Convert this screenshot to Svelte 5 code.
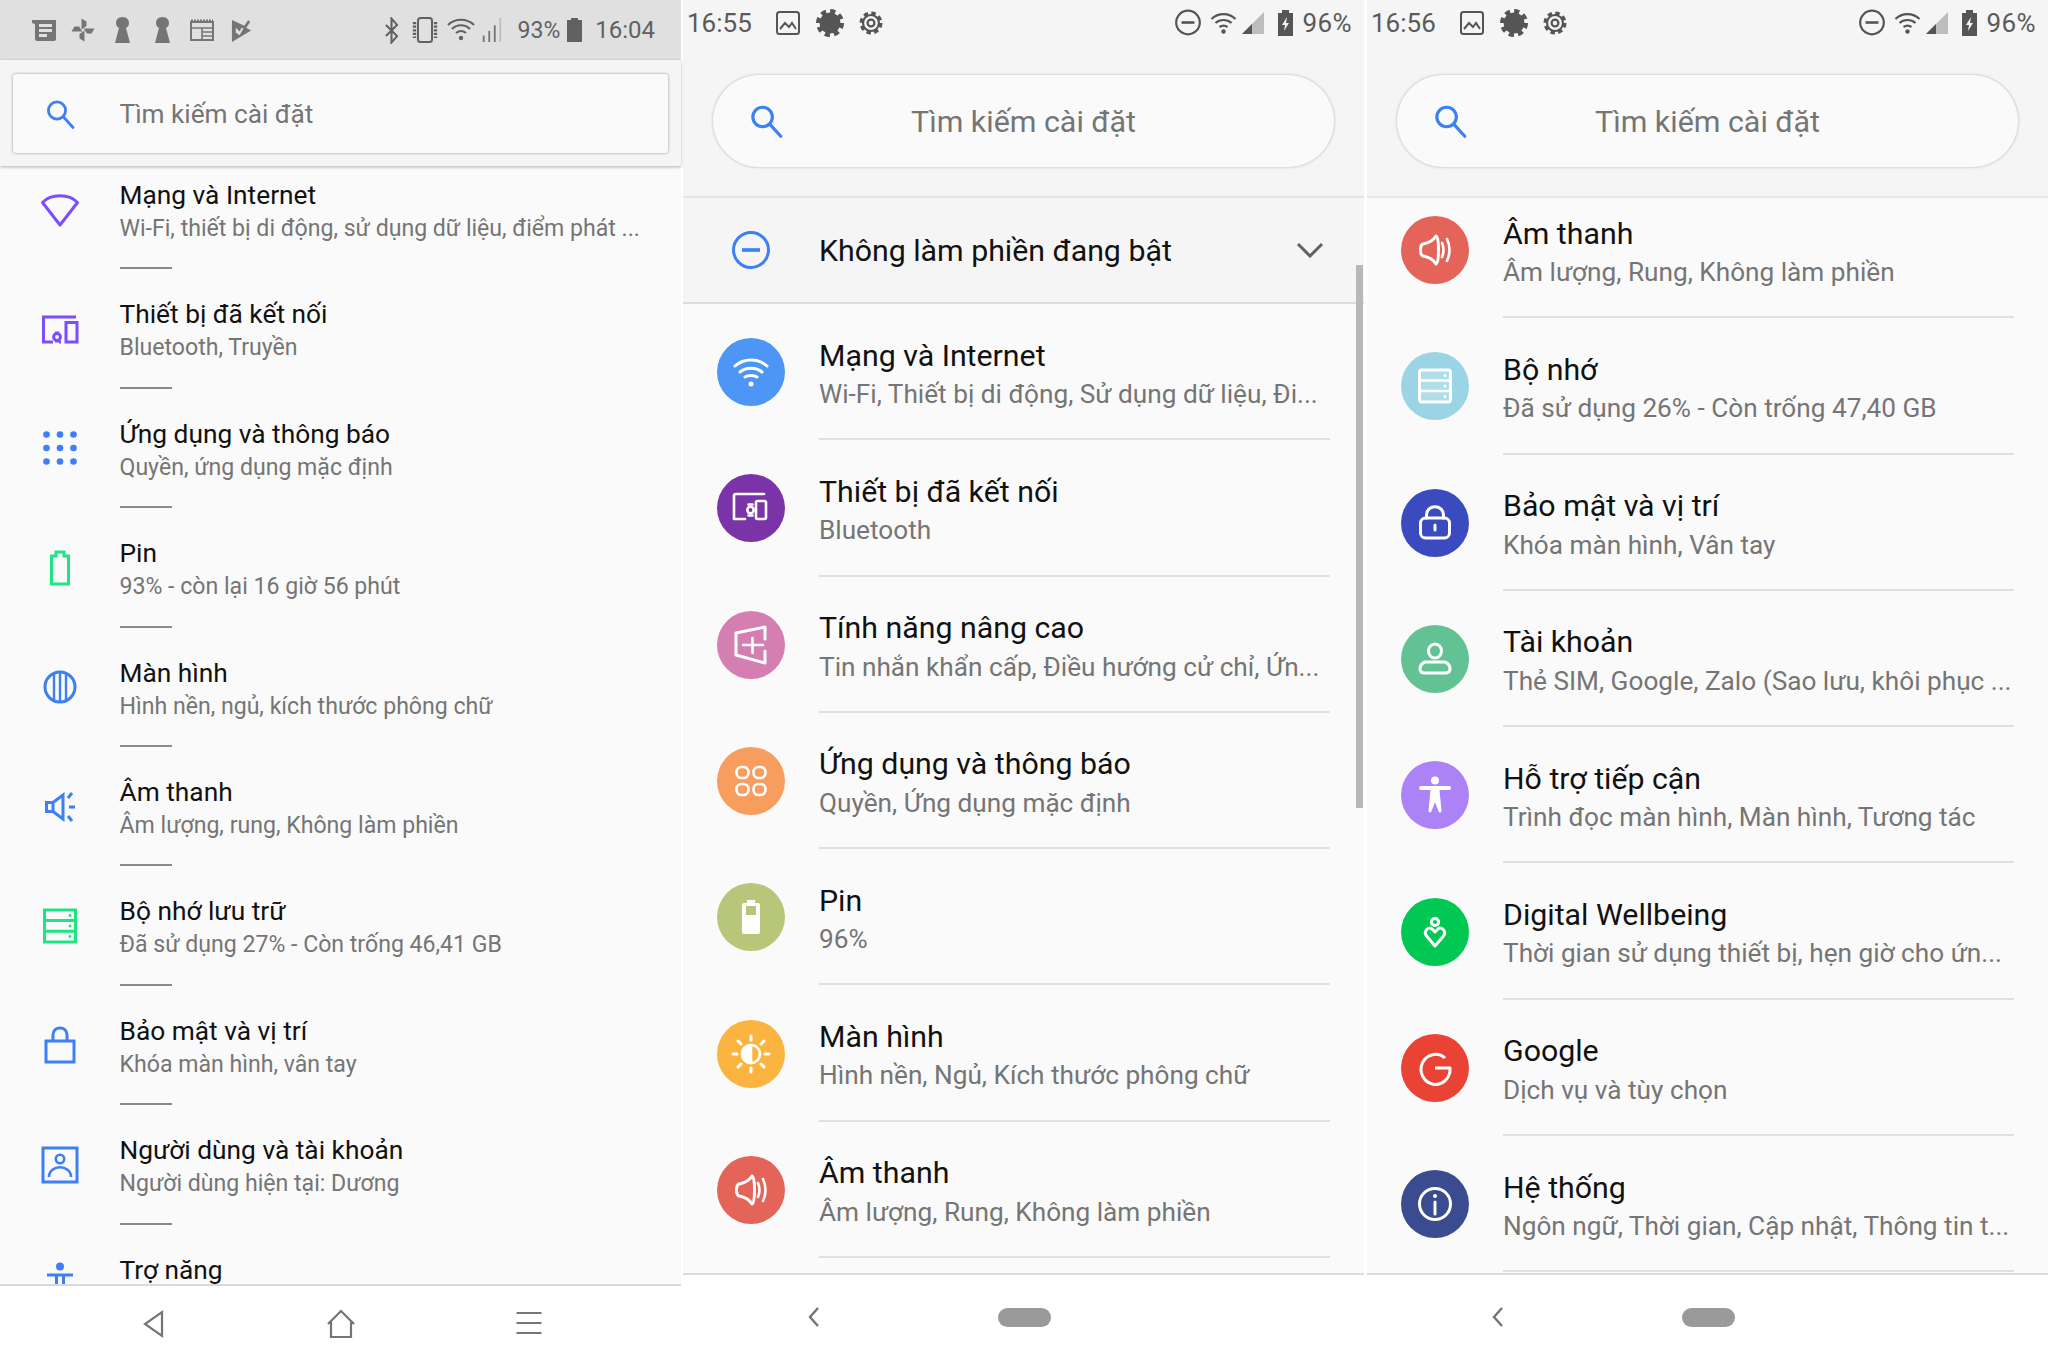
<script lang="ts">
	const oldRows = [
		{ icon: 'wifi', title: 'Mạng và Internet', sub: 'Wi-Fi, thiết bị di động, sử dụng dữ liệu, điểm phát ...' },
		{ icon: 'devices', title: 'Thiết bị đã kết nối', sub: 'Bluetooth, Truyền' },
		{ icon: 'dots', title: 'Ứng dụng và thông báo', sub: 'Quyền, ứng dụng mặc định' },
		{ icon: 'battery', title: 'Pin', sub: '93% - còn lại 16 giờ 56 phút' },
		{ icon: 'display', title: 'Màn hình', sub: 'Hình nền, ngủ, kích thước phông chữ' },
		{ icon: 'speaker', title: 'Âm thanh', sub: 'Âm lượng, rung, Không làm phiền' },
		{ icon: 'storage', title: 'Bộ nhớ lưu trữ', sub: 'Đã sử dụng 27% - Còn trống 46,41 GB' },
		{ icon: 'lock', title: 'Bảo mật và vị trí', sub: 'Khóa màn hình, vân tay' },
		{ icon: 'user', title: 'Người dùng và tài khoản', sub: 'Người dùng hiện tại: Dương' },
		{ icon: 'access', title: 'Trợ năng', sub: '' }
	];

	const listA = [
		{ icon: 'wifi', color: '#4d96f5', title: 'Mạng và Internet', sub: 'Wi-Fi, Thiết bị di động, Sử dụng dữ liệu, Đi...' },
		{ icon: 'devices', color: '#7b33a8', title: 'Thiết bị đã kết nối', sub: 'Bluetooth' },
		{ icon: 'plus', color: '#d57eb1', title: 'Tính năng nâng cao', sub: 'Tin nhắn khẩn cấp, Điều hướng cử chỉ, Ứn...' },
		{ icon: 'apps', color: '#f79d5e', title: 'Ứng dụng và thông báo', sub: 'Quyền, Ứng dụng mặc định' },
		{ icon: 'battery', color: '#b7c678', title: 'Pin', sub: '96%' },
		{ icon: 'sun', color: '#fbb440', title: 'Màn hình', sub: 'Hình nền, Ngủ, Kích thước phông chữ' },
		{ icon: 'sound', color: '#e5645a', title: 'Âm thanh', sub: 'Âm lượng, Rung, Không làm phiền' }
	];

	const listB = [
		{ icon: 'sound', color: '#e5645a', title: 'Âm thanh', sub: 'Âm lượng, Rung, Không làm phiền' },
		{ icon: 'storage', color: '#9ad4e5', title: 'Bộ nhớ', sub: 'Đã sử dụng 26% - Còn trống 47,40 GB' },
		{ icon: 'lock', color: '#3a4bc0', title: 'Bảo mật và vị trí', sub: 'Khóa màn hình, Vân tay' },
		{ icon: 'user', color: '#62c294', title: 'Tài khoản', sub: 'Thẻ SIM, Google, Zalo (Sao lưu, khôi phục ...' },
		{ icon: 'access', color: '#ac82f7', title: 'Hỗ trợ tiếp cận', sub: 'Trình đọc màn hình, Màn hình, Tương tác' },
		{ icon: 'heart', color: '#00c853', title: 'Digital Wellbeing', sub: 'Thời gian sử dụng thiết bị, hẹn giờ cho ứn...' },
		{ icon: 'google', color: '#ea4335', title: 'Google', sub: 'Dịch vụ và tùy chọn' },
		{ icon: 'info', color: '#3b4b8f', title: 'Hệ thống', sub: 'Ngôn ngữ, Thời gian, Cập nhật, Thông tin t...' }
	];
</script>

{#snippet oldIcon(name)}
	<svg class="old-icon" viewBox="0 0 40 40" fill="none" stroke-width="3">
		{#if name === 'wifi'}
			<path d="M2.5 12.5 C11 3.5 29 3.5 37.5 12.5 L20 35 Z" stroke="#7c4dff" stroke-linejoin="round" />
		{:else if name === 'devices'}
			<path d="M36 8 H3.5 V33 H13 M19 33 H21" stroke="#7c4dff" />
			<rect x="26" y="13.5" width="11" height="19.5" stroke="#7c4dff" />
			<circle cx="17" cy="28" r="3.4" stroke="#7c4dff" />
			<path d="M15 24 h4 M15 32 h4" stroke="#7c4dff" />
		{:else if name === 'dots'}
			{#each [6.5, 20, 33.5] as y}
				{#each [6.5, 20, 33.5] as x}
					<circle cx={x} cy={y} r="3.3" fill="#3d7ff5" />
				{/each}
			{/each}
		{:else if name === 'battery'}
			<path d="M11.5 8 H16 V4 H24 V8 H28.5 V36 H11.5 Z" stroke="#1de583" stroke-width="3" />
		{:else if name === 'display'}
			<circle cx="20" cy="20" r="15" stroke="#3d7ff5" stroke-width="3" />
			<path d="M14 6 V34 M20 5 V35 M26 6 V34" stroke="#3d7ff5" stroke-width="2.4" />
		{:else if name === 'speaker'}
			<path d="M6.5 15.5 H13 L23 8 V32 L13 24.5 H6.5 Z M13 15.5 V24.5" stroke="#3d7ff5" stroke-width="3" />
			<path d="M28 11 L32 6 M29 20 H35 M28 29 L32 34" stroke="#3d7ff5" stroke-width="3" />
		{:else if name === 'storage'}
			<rect x="4.5" y="4" width="31" height="32" stroke="#1de583" stroke-width="3" />
			<path d="M4.5 14.6 H35.5 M4.5 25.3 H35.5" stroke="#1de583" stroke-width="3" />
			<circle cx="30" cy="9.5" r="1.4" fill="#1de583" />
			<circle cx="30" cy="20" r="1.4" fill="#1de583" />
			<circle cx="30" cy="30.5" r="1.4" fill="#1de583" />
		{:else if name === 'lock'}
			<rect x="6" y="16" width="28" height="21" stroke="#3d7ff5" stroke-width="3" />
			<path d="M13 16 V10 C13 0.5 27 0.5 27 10 V16" stroke="#3d7ff5" stroke-width="3" />
		{:else if name === 'user'}
			<rect x="3" y="3" width="34" height="34" stroke="#3d7ff5" stroke-width="3" />
			<circle cx="20" cy="14" r="4.2" stroke="#3d7ff5" stroke-width="2.6" />
			<path d="M9 32 C9 19 31 19 31 32" stroke="#3d7ff5" stroke-width="2.6" />
		{:else if name === 'access'}
			<circle cx="20" cy="2.5" r="4" fill="#3d7ff5" />
			<path d="M7 11 H33 M16.5 11 V28 M23.5 11 V28" stroke="#3d7ff5" stroke-width="3" />
		{/if}
	</svg>
{/snippet}

{#snippet badge(name, color)}
	<svg class="badge" viewBox="0 0 68 68" fill="none" stroke="#fff" stroke-width="2.6" stroke-linecap="round" stroke-linejoin="round">
		<circle cx="34" cy="34" r="34" fill={color} stroke="none" />
		{#if name === 'wifi'}
			<path d="M18 28 C27 20 41 20 50 28 M23 34 C29 29 39 29 45 34 M28 39 C31 37 37 37 40 39" stroke-width="3" />
			<circle cx="34" cy="46" r="2.5" fill="#fff" stroke="none" />
		{:else if name === 'devices'}
			<path d="M47 20 H19 Q17 20 17 22 V45 H28" />
			<rect x="39" y="27" width="10" height="18" rx="1.5" />
			<circle cx="33.5" cy="36" r="3.2" />
			<path d="M31.5 30.5 h4 M31.5 41.5 h4" />
		{:else if name === 'plus'}
			<path d="M48 28 V16 L19 22 V44 L48 52 V40" stroke-width="3" />
			<path d="M26 34 H46 M35.5 27 V42" stroke-width="2.6" />
		{:else if name === 'apps'}
			{#each [[25.5, 25.5], [42.5, 25.5], [25.5, 42.5], [42.5, 42.5]] as [x, y]}
				<rect x={x - 6} y={y - 5.5} width="12" height="11" rx="5" stroke-width="2.6" />
			{/each}
		{:else if name === 'battery'}
			<path d="M25 22 Q25 20 27 20 H30 V17 H38 V20 H41 Q43 20 43 22 V49 Q43 51 41 51 H27 Q25 51 25 49 Z" fill="#fff" stroke="none" />
			<rect x="29" y="23" width="10" height="9" fill="#b7c678" stroke="none" />
		{:else if name === 'sun'}
			<circle cx="34" cy="34" r="9" />
			<path d="M34 25 A9 9 0 0 0 34 43 Z" fill="#fff" />
			<path d="M34 16 V20 M34 48 V52 M16 34 H20 M48 34 H52 M21 21 L24 24 M47 21 L44 24 M21 47 L24 44 M47 47 L44 44" stroke-width="3" />
		{:else if name === 'sound'}
			<path d="M35 20 C32 25 28 27 22 28 Q19.5 29 19.5 34 Q19.5 39 22 40 C28 41 32 43 35 48 Q37.5 47 37.5 34 Q37.5 21 35 20 Z" stroke-width="3" />
			<path d="M41 27 Q44 34 41 41 M46 23 Q51 34 46 45" stroke-width="2.6" />
		{:else if name === 'storage'}
			<rect x="18.5" y="18" width="31" height="32" rx="2.5" stroke-width="3" />
			<path d="M18.5 28.5 H49.5 M18.5 39 H49.5" stroke-width="2.6" />
			<rect x="19" y="19" width="30" height="30" fill="#fff" fill-opacity=".22" stroke="none" />
			<circle cx="44" cy="23.5" r="1.5" fill="#fff" stroke="none" />
			<circle cx="44" cy="34" r="1.5" fill="#fff" stroke="none" />
			<circle cx="44" cy="44.5" r="1.5" fill="#fff" stroke="none" />
		{:else if name === 'lock'}
			<rect x="19.5" y="29" width="29" height="20" rx="5" stroke-width="3" />
			<path d="M25.5 29 V26 C25.5 15 42.5 15 42.5 26 V29" stroke-width="3" />
			<path d="M34 36 V41" stroke-width="3" />
		{:else if name === 'user'}
			<ellipse cx="34" cy="26" rx="6.5" ry="7" stroke-width="3" />
			<path d="M24 37 H44 Q49 39 49 44 Q49 48 44 48 H24 Q19 48 19 44 Q19 39 24 37 Z" stroke-width="3" />
		{:else if name === 'access'}
			<circle cx="34" cy="19.5" r="4" fill="#fff" stroke="none" />
			<path d="M20 27 H48" stroke-width="4" />
			<path d="M34 27 V37 M31 29 L29 50 L34 37 L39 50 L37 29" stroke-width="3" fill="#fff" />
		{:else if name === 'heart'}
			<circle cx="34" cy="24" r="3.6" stroke-width="3" />
			<path d="M34 48 L25.5 38 C22 33 28 28 31 31 L34 34 L37 31 C40 28 46 33 42.5 38 Z" stroke-width="3" />
		{:else if name === 'google'}
			<path d="M44 24 A14.5 15 0 1 0 49 34 H34" stroke-width="3" stroke-linecap="butt" />
		{:else if name === 'info'}
			<circle cx="34" cy="34" r="15.5" stroke-width="3" />
			<path d="M34 32 V44" stroke-width="3" />
			<circle cx="34" cy="26" r="2" fill="#fff" stroke="none" />
		{/if}
	</svg>
{/snippet}

{#snippet search(size)}
	<svg width={size} height={size} viewBox="0 0 30 30" fill="none" stroke="#3d7ff5" stroke-width="2.8" stroke-linecap="round">
		<circle cx="12" cy="11.5" r="8.6" />
		<path d="M18.5 18 L28 28.5" />
	</svg>
{/snippet}

{#snippet keyhole()}
	<svg width="15" height="26" viewBox="0 0 15 26" fill="#757575">
		<path d="M7.5 0 C12 0 14 3 14 6 C14 8 13 10 11 11 L15 26 H0 L4 11 C2 10 1 8 1 6 C1 3 3 0 7.5 0 Z" />
	</svg>
{/snippet}

{#snippet newStatus(time)}
	<div class="status">
		<span class="time">{time}</span>
		<svg class="s-image" width="24" height="24" viewBox="0 0 24 24" fill="none" stroke="#555" stroke-width="2">
			<rect x="1" y="1" width="22" height="22" rx="2.5" />
			<path d="M4 18 L9 12 L13 16 L16 12 L20 18" />
		</svg>
		<svg class="s-gear" width="28" height="30" viewBox="0 0 28 28">
			<circle cx="14" cy="14" r="10.5" fill="#555" />
			<circle cx="14" cy="14" r="11.5" fill="none" stroke="#555" stroke-width="5" stroke-dasharray="5 4" />
		</svg>
		<svg class="s-gear2" width="24" height="26" viewBox="0 0 24 24" fill="none" stroke="#555">
			<circle cx="12" cy="12" r="8" stroke-width="2.2" />
			<circle cx="12" cy="12" r="3.4" stroke-width="2.2" />
			<circle cx="12" cy="12" r="9.8" stroke-width="3.4" stroke-dasharray="4.4 3.3" />
		</svg>
		<span class="grow"></span>
		<svg width="26" height="27" viewBox="0 0 26 26" fill="none" stroke="#555" stroke-width="2.2">
			<circle cx="13" cy="13" r="11.8" />
			<path d="M6.5 13 H19.5" stroke-width="2.6" />
		</svg>
		<svg class="s-wifi" width="27" height="24" viewBox="0 0 27 24" fill="none" stroke="#555" stroke-width="2.2">
			<path d="M1.5 8 C8 1.5 19 1.5 25.5 8 M5.5 12 C10 8 17 8 21.5 12 M9.5 16 C12 14.3 15 14.3 17.5 16" />
			<circle cx="13.5" cy="20.5" r="2.2" fill="#555" stroke="none" />
		</svg>
		<svg class="s-signal" width="22" height="22" viewBox="0 0 22 22">
			<path d="M22 0 V22 H0 Z" fill="#bdbdbd" />
			<path d="M10 12 V22 H0 Z" fill="#555" />
		</svg>
		<svg class="s-batt" width="15" height="26" viewBox="0 0 15 26">
			<path d="M0 3 H4 V0 H11 V3 H15 V26 H0 Z" fill="#555" />
			<path d="M9 7 L4 15 H7 L6 21 L11 13 H8 Z" fill="#f5f5f5" />
		</svg>
		<span class="pct">96%</span>
	</div>
{/snippet}

{#snippet newSearch()}
	<div class="pill">
		<span class="pill-icon">{@render search(34)}</span>
		<span class="pill-text">Tìm kiếm cài đặt</span>
	</div>
{/snippet}

{#snippet newNav()}
	<nav class="nav-new">
		<svg width="14" height="22" viewBox="0 0 14 22" fill="none" stroke="#757575" stroke-width="2.4">
			<path d="M11 2 L3 11 L11 20" />
		</svg>
		<span class="home-pill"></span>
	</nav>
{/snippet}

{#snippet roundRows(rows)}
	{#each rows as row}
		<div class="row-new">
			<div class="slot-new">{@render badge(row.icon, row.color)}</div>
			<div class="body-new">
				<div class="title-new">{row.title}</div>
				<div class="sub-new">{row.sub}</div>
				<div class="rule-new"></div>
			</div>
		</div>
	{/each}
{/snippet}

<div class="app">
	<section class="phone old">
		<div class="status-old">
			<span class="cell">
				<svg width="24" height="21" viewBox="0 0 24 21" fill="#757575">
					<path d="M0 0 H24 V19 Q24 21 22 21 H5 Q3 21 3 19 V4 L0 3 Z M7 4 V7 H20 V4 Z M7 9 V12 H20 V9 Z M7 14 V17 H15 V14 Z" fill-rule="evenodd" />
				</svg>
			</span>
			<span class="cell">
				<svg width="24" height="24" viewBox="0 0 24 24" fill="#757575">
					{#each [0, 90, 180, 270] as turn}
						<path d="M10.5 11.5 V0.5 L15.5 3.5 V8 Z" transform="rotate({turn} 12 12)" />
					{/each}
				</svg>
			</span>
			<span class="cell">{@render keyhole()}</span>
			<span class="cell">{@render keyhole()}</span>
			<span class="cell">
				<svg width="24" height="22" viewBox="0 0 24 22" fill="none" stroke="#757575" stroke-width="2">
					<rect x="1" y="3" width="22" height="18" />
					<path d="M1 2 H23" stroke-dasharray="2 1" stroke-width="3" />
					<path d="M1 9 H23 M12 9 V21 M12 13 H23 M12 17 H23" stroke-width="1.6" />
				</svg>
			</span>
			<span class="cell">
				<svg width="21" height="23" viewBox="0 0 22 24" fill="#757575">
					<path d="M1 1 L14 7 L18 1 L20 3 L16 9 L21 12 L1 24 Z M5 9 V14 L9 17 L13 10 L11 9 L9 13 Z" fill-rule="evenodd" />
				</svg>
			</span>
			<span class="grow"></span>
			<svg width="17" height="27" viewBox="0 0 18 34" fill="none" stroke="#616161" stroke-width="2.6">
				<path d="M2 10 L16 24 L9 32 V2 L16 10 L2 24" />
			</svg>
			<svg class="s-vib" width="26" height="26" viewBox="0 0 26 26" fill="none" stroke="#616161" stroke-width="2">
				<rect x="6" y="1" width="14" height="24" rx="2.5" />
				<path d="M2.5 5 V21 M23.5 5 V21" stroke-width="3.4" stroke-dasharray="2.2 1.4" />
			</svg>
			<svg class="s-wifi-old" width="28" height="24" viewBox="0 0 28 24" fill="none" stroke="#616161" stroke-width="2">
				<path d="M1 7 C8 0 20 0 27 7 M5 11 C10 6 18 6 23 11 M9 15 C12 12.5 16 12.5 19 15" />
				<circle cx="14" cy="20" r="2.2" fill="#616161" stroke="none" />
			</svg>
			<svg class="s-bars" width="20" height="24" viewBox="0 0 20 26" fill="#757575">
				<rect x="0" y="19" width="2" height="7" />
				<rect x="6" y="14" width="2" height="12" />
				<rect x="12" y="8" width="2" height="18" />
				<rect x="18" y="0" width="2" height="26" fill="#bdbdbd" />
			</svg>
			<span class="pct-old">93%</span>
			<svg class="s-batt-old" width="15" height="24" viewBox="0 0 15 24" fill="#616161">
				<path d="M0 2 H4 V0 H11 V2 H15 V24 H0 Z" />
			</svg>
			<span class="time-old">16:04</span>
		</div>
		<header class="head-old">
			<div class="card">
				<span class="card-icon">{@render search(30)}</span>
				<span class="card-text">Tìm kiếm cài đặt</span>
			</div>
		</header>
		<div class="list">
			<div class="shift-old">
				{#each oldRows as row}
					<div class="row-old">
						<div class="slot-old">{@render oldIcon(row.icon)}</div>
						<div class="body-old">
							<div class="title-old">{row.title}</div>
							<div class="sub-old">{row.sub}</div>
							<div class="rule-old"></div>
						</div>
					</div>
				{/each}
			</div>
		</div>
		<nav class="nav-old">
			<svg width="40" height="30" viewBox="0 0 40 30" fill="none" stroke="#757575" stroke-width="2.2">
				<path d="M29 3 V27 L12 15 Z" />
			</svg>
			<svg width="40" height="30" viewBox="0 0 40 30" fill="none" stroke="#757575" stroke-width="2.2">
				<path d="M7 15 L20 2 L33 15 M10 13 V28 H30 V13" />
			</svg>
			<svg width="40" height="30" viewBox="0 0 40 30" fill="none" stroke="#757575" stroke-width="2">
				<path d="M7.5 4 H32.5 M7.5 14 H32.5 M7.5 24 H32.5" />
			</svg>
		</nav>
	</section>

	<section class="phone new second">
		<header class="head-new">
			{@render newStatus('16:55')}
			{@render newSearch()}
		</header>
		<div class="banner">
			<svg width="38" height="38" viewBox="0 0 38 38" fill="none" stroke="#3d7ff5" stroke-width="3">
				<circle cx="19" cy="19" r="17.5" />
				<path d="M10 19 H28" stroke-width="3.6" />
			</svg>
			<span class="banner-text">Không làm phiền đang bật</span>
			<svg class="banner-caret" width="28" height="16" viewBox="0 0 28 16" fill="none" stroke="#616161" stroke-width="3">
				<path d="M2 2 L14 14 L26 2" />
			</svg>
		</div>
		<div class="list">
			{@render roundRows(listA)}
		</div>
		{@render newNav()}
		<div class="scrollbar"></div>
	</section>

	<section class="phone new third">
		<header class="head-new">
			{@render newStatus('16:56')}
			{@render newSearch()}
		</header>
		<div class="list">
			<div class="shift-new">
				{@render roundRows(listB)}
			</div>
		</div>
		{@render newNav()}
	</section>
</div>

<style>
	:global(body) {
		margin: 0;
		background: #fff;
	}

	.app {
		display: flex;
		width: 2048px;
		height: 1363px;
		overflow: hidden;
		font-family: Roboto, 'Liberation Sans', sans-serif;
	}

	.grow {
		flex: 1;
	}

	.phone {
		position: relative;
		display: flex;
		flex-direction: column;
		flex: none;
		height: 1363px;
		background: #fafafa;
	}

	.old {
		width: 681px;
		margin-right: 2px;
	}

	.second {
		width: 681px;
		margin-right: 3px;
	}

	.third {
		width: 681px;
	}

	.list {
		flex: 1;
		min-height: 0;
		overflow: hidden;
	}

	/* left phone */
	.status-old {
		display: flex;
		align-items: center;
		height: 60px;
		padding: 0 26px 0 24px;
		background: #e0e0e0;
		color: #616161;
		box-sizing: border-box;
	}

	.cell {
		display: flex;
		justify-content: center;
		flex: none;
		width: 39.6px;
	}

	.s-vib {
		margin-left: 12px;
	}

	.s-wifi-old {
		margin-left: 9px;
	}

	.s-bars {
		margin-left: 7px;
	}

	.pct-old {
		margin-left: 16px;
		font-size: 23px;
	}

	.s-batt-old {
		margin-left: 7px;
	}

	.time-old {
		margin-left: 13px;
		font-size: 24px;
	}

	.head-old {
		position: relative;
		z-index: 1;
		height: 106px;
		padding: 14px 13px 0;
		background: #f5f5f5;
		box-sizing: border-box;
		box-shadow: 0 1px 3px rgba(0, 0, 0, 0.3);
	}

	.card {
		display: flex;
		align-items: center;
		height: 79px;
		background: #fafafa;
		border-radius: 3px;
		box-shadow: 0 0 3px rgba(0, 0, 0, 0.4);
	}

	.card-icon {
		display: flex;
		width: 106.5px;
		padding-left: 32px;
		box-sizing: border-box;
	}

	.card-text {
		font-size: 26.2px;
		color: #757575;
	}

	.shift-old {
		margin-top: -16px;
	}

	.row-old {
		display: flex;
		height: 119.4px;
	}

	.slot-old {
		display: flex;
		align-items: center;
		justify-content: center;
		flex: none;
		width: 119.5px;
	}

	.old-icon {
		width: 40px;
		height: 40px;
		overflow: visible;
	}

	.body-old {
		display: flex;
		flex-direction: column;
		flex: 1;
		min-width: 0;
		padding-top: 28px;
		box-sizing: border-box;
	}

	.title-old {
		font-size: 26.3px;
		line-height: 34px;
		color: #111;
		white-space: nowrap;
	}

	.sub-old {
		font-size: 23.1px;
		line-height: 34px;
		color: #757575;
		white-space: nowrap;
	}

	.rule-old {
		width: 52px;
		height: 2px;
		margin-top: auto;
		background: #8a8a8a;
	}

	.nav-old {
		position: relative;
		z-index: 1;
		display: flex;
		align-items: center;
		gap: 148px;
		flex: none;
		height: 79px;
		padding: 0 0 2px 133px;
		background: #fff;
		border-top: 2px solid #d9d9d9;
		box-sizing: border-box;
	}

	/* right phones */
	.head-new {
		flex: none;
		height: 198px;
		background: #f5f5f5;
		border-bottom: 2px solid #e6e6e6;
		box-sizing: border-box;
	}

	.status {
		display: flex;
		align-items: center;
		height: 45px;
		padding: 0 12px 0 4px;
		box-sizing: border-box;
		color: #5a5a5a;
	}

	.time {
		font-size: 26px;
		width: 66px;
	}

	.s-image {
		margin-left: 23px;
	}

	.s-gear {
		margin-left: 16px;
	}

	.s-gear2 {
		margin-left: 15px;
	}

	.s-wifi {
		margin-left: 8.5px;
	}

	.s-signal {
		margin-left: 5px;
	}

	.s-batt {
		margin-left: 14px;
	}

	.pct {
		margin-left: 10px;
		font-size: 26px;
		letter-spacing: 0.4px;
	}

	.pill {
		position: relative;
		display: flex;
		align-items: center;
		justify-content: center;
		height: 92px;
		margin: 30px 30px 0;
		background: #fafafa;
		border-radius: 46px;
		box-shadow: 0 0 3px rgba(0, 0, 0, 0.28);
	}

	.pill-icon {
		position: absolute;
		left: 36px;
		top: 29px;
		display: flex;
	}

	.pill-text {
		font-size: 30.4px;
		color: #757575;
	}

	.banner {
		display: flex;
		align-items: center;
		flex: none;
		height: 106px;
		padding-left: 49px;
		background: #f5f5f5;
		border-bottom: 2px solid #dcdcdc;
		box-sizing: border-box;
	}

	.banner-text {
		margin-left: 49px;
		font-size: 30.3px;
		color: #111;
	}

	.banner-caret {
		margin-left: auto;
		margin-right: 40px;
	}

	.shift-new {
		margin-top: -16px;
	}

	.row-new {
		display: flex;
		height: 136.3px;
	}

	.slot-new {
		display: flex;
		align-items: center;
		justify-content: center;
		flex: none;
		width: 136px;
	}

	.badge {
		width: 68px;
		height: 68px;
	}

	.body-new {
		display: flex;
		flex-direction: column;
		flex: none;
		width: 511px;
		padding-top: 33.5px;
		box-sizing: border-box;
	}

	.title-new {
		font-size: 30.3px;
		line-height: 36px;
		color: #111;
		white-space: nowrap;
	}

	.sub-new {
		margin-top: 2.5px;
		font-size: 26.2px;
		line-height: 36px;
		color: #757575;
		white-space: nowrap;
	}

	.rule-new {
		height: 2px;
		margin-top: auto;
		background: #e0e0e0;
	}

	.nav-new {
		position: relative;
		z-index: 1;
		display: flex;
		align-items: center;
		flex: none;
		height: 90px;
		padding: 0 0 4px 124px;
		background: #fff;
		border-top: 2px solid #dcdcdc;
		box-sizing: border-box;
	}

	.home-pill {
		width: 53px;
		height: 19px;
		margin-left: 176.5px;
		border-radius: 10px;
		background: #9a9a9a;
	}

	.scrollbar {
		position: absolute;
		left: 673px;
		top: 265px;
		width: 7px;
		height: 543px;
		background: #b8b8b8;
	}
</style>
